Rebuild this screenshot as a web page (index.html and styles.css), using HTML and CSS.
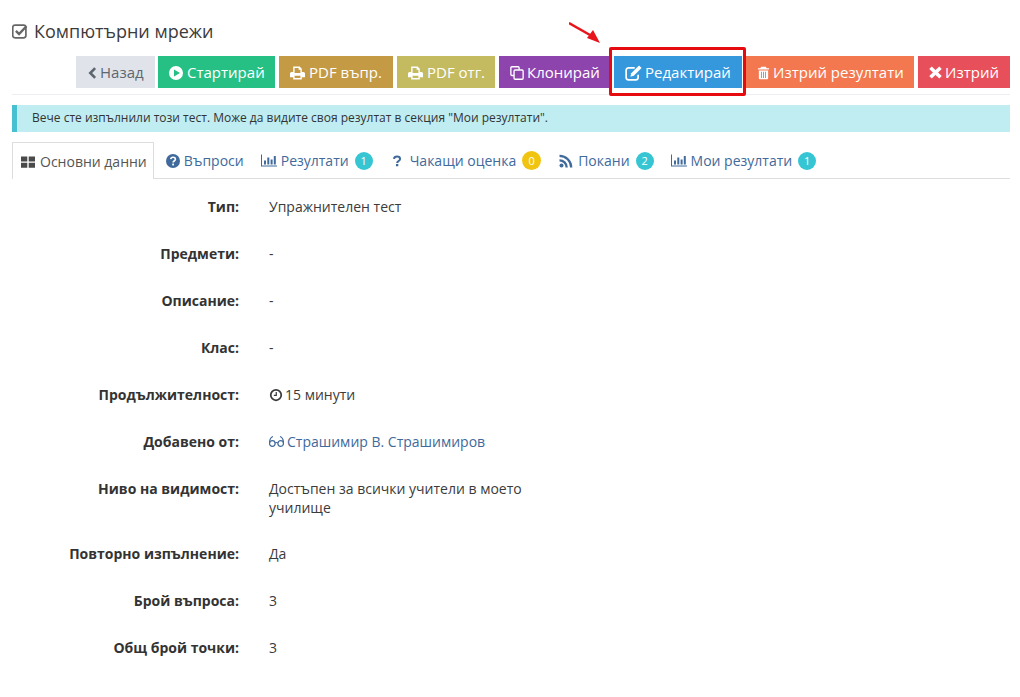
FILE: index.html
```html
<!DOCTYPE html>
<html lang="bg">
<head>
<meta charset="utf-8">
<title>Компютърни мрежи</title>
<link rel="stylesheet" href="styles.css">
</head>
<body>
<svg class="defs" width="0" height="0">
  <symbol id="i-check" viewBox="0.3 1 15.2 14"><rect x="1" y="2" width="12.5" height="12" rx="2.2" fill="none" stroke="currentColor" stroke-width="1.6"/><path d="M4 7.5l3 3 7-7.5" fill="none" stroke="currentColor" stroke-width="2.3"/></symbol>
  <symbol id="i-back" viewBox="3 0 10 16"><path d="M11 2.500L5.500 8l5.500 5.500" fill="none" stroke="currentColor" stroke-width="3"/></symbol>
  <symbol id="i-play" viewBox="1 1 14 14"><path fill="currentColor" fill-rule="evenodd" d="M8 1a7 7 0 1 0 0 14A7 7 0 0 0 8 1zM6 4.500l6 3.500-6 3.500z"/></symbol>
  <symbol id="i-print" viewBox="1 1.500 14 13"><path fill="currentColor" fill-rule="evenodd" d="M4 2h6l2 2v3h1.500A1.500 1.500 0 0 1 15 8.500V12h-3v2H4v-2H1V8.500A1.500 1.500 0 0 1 2.500 7H4zM5.300 3.300V8h5.400V5H9V3.300zM5.300 10.500v2.200h5.400v-2.200z"/></symbol>
  <symbol id="i-copy" viewBox="1.800 1.300 13.300 13.600"><path fill="none" stroke="currentColor" stroke-width="1.300" d="M10.500 5V3a1 1 0 0 0-1-1h-6a1 1 0 0 0-1 1v6.500a1 1 0 0 0 1 1H5.500"/><rect x="5.600" y="5.200" width="8.800" height="9" rx="1" fill="none" stroke="currentColor" stroke-width="1.300"/></symbol>
  <symbol id="i-edit" viewBox="0.700 1 14.500 14"><path fill="none" stroke="currentColor" stroke-width="1.500" d="M12 9.500V12a2 2 0 0 1-2 2H3.500a2 2 0 0 1-2-2V5.500a2 2 0 0 1 2-2H9"/><path fill="currentColor" d="M12.800 1.500l2.200 2.200-6.800 6.800-3 .8.800-3z"/></symbol>
  <symbol id="i-trash" viewBox="1 1 14 14.500"><path fill="currentColor" fill-rule="evenodd" d="M5.500 1.500h5l1 1.500H14v1.500H2V3h2.500zM3 5.500h10V14a1 1 0 0 1-1 1H4a1 1 0 0 1-1-1zM5.300 7v6.500h1V7zM7.500 7v6.500h1V7zM9.700 7v6.500h1V7z"/></symbol>
  <symbol id="i-times" viewBox="1.500 1.500 13 13"><path fill="none" stroke="currentColor" stroke-width="3.600" d="M3 3.200l10 9.600M13 3.200L3 12.800"/></symbol>
  <symbol id="i-grid" viewBox="1 1.500 14 13"><path fill="currentColor" d="M1 2.500h6.300v5H1zM8.700 2.500H15v5H8.700zM1 8.800h6.300v5H1zM8.700 8.800H15v5H8.700z"/></symbol>
  <symbol id="i-qc" viewBox="1 1 14 14"><circle cx="8" cy="8" r="7" fill="currentColor"/><path d="M5.700 6.200C5.900 4.800 7 4.300 8 4.300c1.400 0 2.400.8 2.400 2 0 1.700-2.300 1.700-2.300 3.200" fill="none" stroke="#fff" stroke-width="1.600"/><rect x="7.200" y="10.600" width="1.800" height="1.800" fill="#fff"/></symbol>
  <symbol id="i-bars" viewBox="0 2 16 12"><path fill="currentColor" d="M0 2h1v11h15v1H0zM3 8h2v4H3zM6.300 5h2v7h-2zM9.600 7h2v5h-2zM12.800 3.500h2V12h-2z"/></symbol>
  <symbol id="i-q" viewBox="0 0 16 16"><path d="M4.500 5.500C4.800 3.500 6.400 2.800 8 2.800c2 0 3.500 1 3.500 2.800 0 2.500-3.300 2.400-3.300 4.800" fill="none" stroke="currentColor" stroke-width="2.300"/><rect x="6.800" y="11.400" width="2.700" height="2.600" fill="currentColor"/></symbol>
  <symbol id="i-rss" viewBox="0 1 15 15"><circle cx="3.500" cy="12.500" r="2" fill="currentColor"/><path d="M1.500 7.300a7.200 7.200 0 0 1 7.200 7.200M1.500 2.800a11.700 11.700 0 0 1 11.700 11.700" fill="none" stroke="currentColor" stroke-width="2.300"/></symbol>
  <symbol id="i-clock" viewBox="0 0 16 16"><circle cx="8" cy="8" r="6" fill="none" stroke="currentColor" stroke-width="2"/><path d="M8.300 4.500v4H5.500" fill="none" stroke="currentColor" stroke-width="1.400"/></symbol>
  <symbol id="i-glasses" viewBox="0.500 2 15 12"><g fill="none" stroke="currentColor" stroke-width="1.200"><circle cx="3.800" cy="10" r="2.800"/><circle cx="12.200" cy="10" r="2.800"/><path d="M6.500 9.500q1.500-1 3 0M1 10c0-3 .5-6 3.500-7M15 10c0-3-.5-6-3.500-7"/></g></symbol>
</svg>

<main class="page">
  <h1 class="title"><svg class="ico title-ico"><use href="#i-check"/></svg>Компютърни мрежи</h1>

  <div class="toolbar">
    <a class="btn btn-back"><svg class="ico ico-back"><use href="#i-back"/></svg>Назад</a>
    <a class="btn btn-start"><svg class="ico ico-play"><use href="#i-play"/></svg>Стартирай</a>
    <a class="btn btn-pdfq"><svg class="ico ico-print"><use href="#i-print"/></svg>PDF въпр.</a>
    <a class="btn btn-pdfa"><svg class="ico ico-print"><use href="#i-print"/></svg>PDF отг.</a>
    <a class="btn btn-clone"><svg class="ico"><use href="#i-copy"/></svg>Клонирай</a>
    <a class="btn btn-edit"><svg class="ico ico-edit"><use href="#i-edit"/></svg>Редактирай</a>
    <a class="btn btn-clear"><svg class="ico ico-trash"><use href="#i-trash"/></svg>Изтрий резултати</a>
    <a class="btn btn-del"><svg class="ico ico-times"><use href="#i-times"/></svg>Изтрий</a>
    <span class="highlight"></span>
    <svg class="arrow" viewBox="0 0 34 26" width="34" height="26"><path d="M0 1L21 13" stroke="#e8141c" stroke-width="2.400"/><path d="M31 21L18 16l6-8z" fill="#e8141c"/></svg>
  </div>

  <div class="alert">Вече сте изпълнили този тест. Може да видите своя резултат в секция "Мои резултати".</div>

  <nav class="tabs">
    <a class="tab tab-active"><svg class="ico tab-ico"><use href="#i-grid"/></svg>Основни данни</a>
    <a class="tab"><svg class="ico tab-ico"><use href="#i-qc"/></svg>Въпроси</a>
    <a class="tab"><svg class="ico tab-ico tab-ico-bars"><use href="#i-bars"/></svg>Резултати<span class="badge">1</span></a>
    <a class="tab"><svg class="ico tab-ico tab-ico-q"><use href="#i-q"/></svg>Чакащи оценка<span class="badge badge-yellow">0</span></a>
    <a class="tab"><svg class="ico tab-ico tab-ico-rss"><use href="#i-rss"/></svg>Покани<span class="badge">2</span></a>
    <a class="tab"><svg class="ico tab-ico tab-ico-bars"><use href="#i-bars"/></svg>Мои резултати<span class="badge">1</span></a>
  </nav>

  <dl class="details">
    <dt>Тип:</dt><dd>Упражнителен тест</dd>
    <dt>Предмети:</dt><dd>-</dd>
    <dt>Описание:</dt><dd>-</dd>
    <dt>Клас:</dt><dd>-</dd>
    <dt>Продължителност:</dt><dd><svg class="ico val-ico"><use href="#i-clock"/></svg>15 минути</dd>
    <dt>Добавено от:</dt><dd><a class="link"><svg class="ico val-ico val-ico-glasses"><use href="#i-glasses"/></svg>Страшимир В. Страшимиров</a></dd>
    <dt>Ниво на видимост:</dt><dd class="dd-wrap">Достъпен за всички учители в моето училище</dd>
    <dt>Повторно изпълнение:</dt><dd>Да</dd>
    <dt>Брой въпроса:</dt><dd>3</dd>
    <dt>Общ брой точки:</dt><dd>3</dd>
  </dl>
</main>
</body>
</html>
```
FILE: styles.css
```css
* { box-sizing: border-box; }
html, body { margin: 0; padding: 0; background: #fff; }
body { font-family: "Open Sans", "Noto Sans", sans-serif; font-size: 14px; color: #3b3b3b; overflow: hidden; height: 697px; }
.defs { position: absolute; }
.page { padding: 20px 10px 0 12px; }
.ico { display: inline-block; width: 14px; height: 14px; vertical-align: -2px; margin-right: 3px; flex: none; }
.title { margin: 0; font-size: 18px; font-weight: 400; line-height: 22px; height: 36px; color: #3b3b3b; }
.title-ico { width: 16px; height: 15px; margin-right: 6px; color: #666; vertical-align: -1px; }

.toolbar { position: relative; display: flex; justify-content: flex-end; gap: 4px; height: 39px; border-bottom: 1px solid #eceef1; }
.btn { display: block; flex: none; height: 32px; line-height: 32px; padding: 0 0 0 11px; font-size: 15px; color: #fff; white-space: nowrap; overflow: hidden; }
.btn-back { width: 79px; background: #e0e4ea; color: #5e6670; margin-right: -1px; }
.btn-start { width: 117px; background: #26bf84; }
.btn-pdfq { width: 114px; background: #c49a45; }
.btn-pdfa { width: 98px; background: #c4ba60; }
.btn-clone { width: 111px; background: #8e44ad; }
.btn-edit { width: 128px; background: #3598dc; }
.btn-clear { width: 168px; background: #f3774f; }
.btn-del { width: 92px; background: #e7505a; }
.ico-back { width: 9px; margin-right: 3px; margin-left: 1px; }
.ico-play { width: 14px; margin-right: 4px; }
.ico-print { width: 15px; margin-right: 4px; }
.ico-edit { width: 17px; height: 16px; margin-right: 3px; vertical-align: -3px; }
.ico-trash { width: 13px; margin-right: 3px; }
.ico-times { width: 13px; height: 13px; margin-right: 3px; vertical-align: -1px; }
.highlight { position: absolute; left: 597px; top: -9px; width: 137px; height: 49px; border: 3px solid #e60b0f; border-radius: 2px; }
.arrow { position: absolute; left: 557px; top: -34px; }

.alert { margin-top: 10px; height: 27px; line-height: 26px; padding-left: 15px; font-size: 12px; color: #333; background: #bfedf1; border-left: 5px solid #47c1d1; }

.tabs { display: flex; margin-top: 10px; height: 37px; border-bottom: 1px solid #ddd; }
.tab { display: block; height: 37px; line-height: 38px; padding: 0 7px 0 9px; margin-right: 1px; color: #406a9b; white-space: nowrap; }
.tab-active { color: #555; background: #fff; border: 1px solid #ddd; border-bottom: 0; padding: 0 6px 0 8px; margin-right: 3px; }
.tab-ico { margin-right: 4px; }
.tab-active .tab-ico { color: #4a4a4a; margin-right: 5px; }
.tab-ico-bars { width: 16px; height: 13px; vertical-align: -1px; }
.tab-ico-q { margin-right: 6px; }
.tab-ico-rss { width: 15px; height: 15px; margin-right: 5px; vertical-align: -3px; }
.badge { display: inline-block; width: 18px; height: 18px; line-height: 18px; margin-left: 6px; border-radius: 50%; background: #36c6d3; color: #fff; font-size: 11px; text-align: center; vertical-align: 1px; }
.badge-yellow { width: 19px; height: 19px; line-height: 19px; background: #f1c40f; }

.details { display: grid; grid-template-columns: 227px 272px; column-gap: 30px; row-gap: 28px; margin: 18px 0 0; line-height: 19px; }
.details dt { font-weight: 700; text-align: right; color: #333; }
.details dd { margin: 0; }
.details .dd-wrap { margin-bottom: -1px; }
.val-ico { margin-right: 2px; }
.val-ico-glasses { width: 15px; height: 13px; margin-right: 3px; vertical-align: -1px; }
.link { color: #406a9b; }
```
